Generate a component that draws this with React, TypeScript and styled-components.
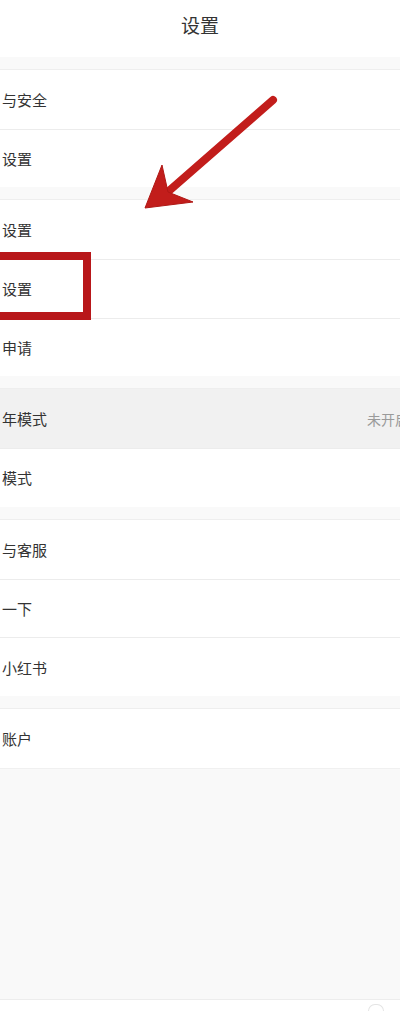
import styled, { createGlobalStyle } from "styled-components";

const GlobalStyle = createGlobalStyle`
  html, body {
    margin: 0;
    padding: 0;
    background: #f9f9f9;
  }
  body {
    font-family: "Noto Sans CJK SC", "Noto Sans", sans-serif;
    color: #333;
  }
`;

const groups: { label: string; value?: string; active?: boolean }[][] = [
  [{ label: "与安全" }, { label: "设置" }],
  [{ label: "设置" }, { label: "设置" }, { label: "申请" }],
  [{ label: "年模式", value: "未开启", active: true }, { label: "模式" }],
  [{ label: "与客服" }, { label: "一下" }, { label: "小红书" }],
  [{ label: "账户" }],
];

export default function App() {
  return (
    <>
      <GlobalStyle />
      <StyledPage>
        <Header>设置</Header>
        {groups.map((rows, gi) => (
          <Group key={gi}>
            {rows.map((row, ri) => (
              <Row key={ri} $active={row.active}>
                <Label>{row.label}</Label>
                {row.value && <Value>{row.value}</Value>}
              </Row>
            ))}
          </Group>
        ))}
        <Filler />
        <TabBar>
          <TabIcon />
        </TabBar>

        <Highlight />
        <Arrow width="160" height="140" viewBox="0 0 160 140">
          <path
            d="M143 20 L40 110"
            stroke="#c21d1b"
            strokeWidth="8"
            strokeLinecap="round"
            fill="none"
          />
          <polygon
            points="15,128 32,85 38,112 63,122"
            fill="#c21d1b"
            stroke="#b01815"
            strokeWidth="1"
            strokeLinejoin="round"
          />
        </Arrow>
      </StyledPage>
    </>
  );
}

const StyledPage = styled.div`
  position: relative;
  width: 400px;
  height: 1011px;
  overflow: hidden;
  display: flex;
  flex-direction: column;
  background: #f9f9f9;
`;

const Header = styled.div`
  height: 57px;
  flex: none;
  display: flex;
  align-items: center;
  justify-content: center;
  background: #fff;
  font-size: 19px;
  color: #333;
  padding-bottom: 8px;
  box-sizing: border-box;
`;

const Group = styled.div`
  flex: none;
  margin-top: 12px;
  background: #fff;
  border-top: 1px solid #eeeeee;
`;

const Row = styled.div<{ $active?: boolean }>`
  height: 58.7px;
  box-sizing: border-box;
  display: flex;
  align-items: center;
  justify-content: space-between;
  padding-left: 2px;
  background: ${(p) => (p.$active ? "#f1f1f1" : "#fff")};
  overflow: hidden;

  & + & {
    border-top: 1px solid #ececec;
  }
`;

const Label = styled.span`
  font-size: 15px;
  color: #333;
`;

const Value = styled.span`
  font-size: 14px;
  color: #9a9a9a;
  margin-right: -9px;
  white-space: nowrap;
`;

const Filler = styled.div`
  flex: 1;
  margin-top: 0;
  border-top: 1px solid #f0f0f0;
  background: #f9f9f9;
`;

const TabBar = styled.div`
  height: 11px;
  flex: none;
  background: #fff;
  border-top: 1px solid #ededed;
  position: relative;
`;

const TabIcon = styled.div`
  position: absolute;
  left: 368px;
  top: 4px;
  width: 14px;
  height: 10px;
  border: 1px solid #e4e4e4;
  border-bottom: none;
  border-radius: 7px 7px 0 0;
`;

const Highlight = styled.div`
  position: absolute;
  left: -12px;
  top: 252px;
  width: 87px;
  height: 52px;
  border: 8px solid #b8171a;
`;

const Arrow = styled.svg`
  position: absolute;
  left: 130px;
  top: 80px;
`;
